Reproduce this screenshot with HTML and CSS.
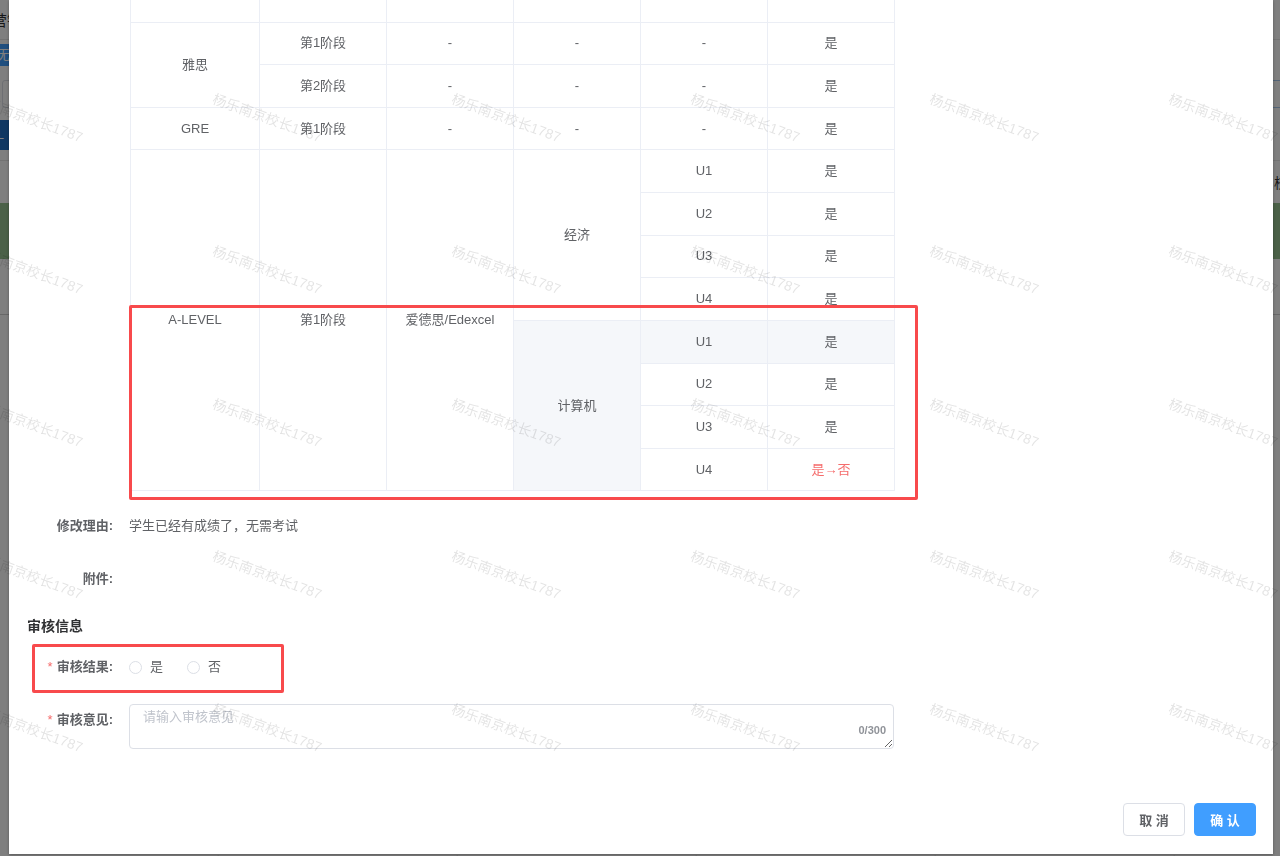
FILE: index.html
```html
<!DOCTYPE html>
<html lang="zh-CN">
<head>
<meta charset="utf-8">
<title>审核</title>
<link rel="stylesheet" href="styles.css">
</head>
<body>
<div class="page">
  <div class="pg-top"><span class="pg-title">营销管理</span></div>
  <div class="pg-tabs"><span class="pg-tab">无</span><span class="pg-tab-r"></span></div>
  <div class="pg-inputs"><span class="pg-input"></span><span class="pg-input pg-input-r"></span></div>
  <div class="pg-btns"><span class="pg-btn">L</span></div>
  <div class="pg-row"><span class="pg-right-text">校</span></div>
  <div class="pg-green"></div>
  <div class="pg-line"></div>
</div>

<div class="overlay">
  <div class="dialog">
    <div class="dialog-body">
      <table class="grid">
        <colgroup><col class="c-first"><col class="c"><col class="c"><col class="c"><col class="c"><col class="c"></colgroup>
        <tbody>
          <tr class="partial"><td></td><td></td><td></td><td></td><td></td><td></td></tr>
          <tr><td rowspan="2">雅思</td><td>第1阶段</td><td>-</td><td>-</td><td>-</td><td>是</td></tr>
          <tr><td>第2阶段</td><td>-</td><td>-</td><td>-</td><td>是</td></tr>
          <tr><td>GRE</td><td>第1阶段</td><td>-</td><td>-</td><td>-</td><td>是</td></tr>
          <tr><td rowspan="8">A-LEVEL</td><td rowspan="8">第1阶段</td><td rowspan="8">爱德思/Edexcel</td><td rowspan="4">经济</td><td>U1</td><td>是</td></tr>
          <tr><td>U2</td><td>是</td></tr>
          <tr><td>U3</td><td>是</td></tr>
          <tr><td>U4</td><td>是</td></tr>
          <tr class="hover"><td rowspan="4" class="hl">计算机</td><td>U1</td><td>是</td></tr>
          <tr><td>U2</td><td>是</td></tr>
          <tr><td>U3</td><td>是</td></tr>
          <tr><td>U4</td><td class="changed">是→否</td></tr>
        </tbody>
      </table>

      <div class="form-item first">
        <label class="form-label">修改理由:</label>
        <div class="form-content">学生已经有成绩了，无需考试</div>
      </div>
      <div class="form-item">
        <label class="form-label">附件:</label>
        <div class="form-content"></div>
      </div>

      <div class="section-title">审核信息</div>

      <div class="form-item">
        <label class="form-label"><span class="req">*</span>审核结果:</label>
        <div class="form-content radios">
          <span class="radio"><span class="radio-dot"></span><span class="radio-text">是</span></span>
          <span class="radio"><span class="radio-dot"></span><span class="radio-text">否</span></span>
        </div>
      </div>
      <div class="form-item">
        <label class="form-label"><span class="req">*</span>审核意见:</label>
        <div class="form-content">
          <div class="textarea-wrap">
            <textarea class="textarea" placeholder="请输入审核意见"></textarea>
            <span class="count">0/300</span>
          </div>
        </div>
      </div>
    </div>
    <div class="dialog-footer">
      <button class="btn">取 消</button>
      <button class="btn btn-primary">确 认</button>
    </div>

    <div class="mark mark-table"></div>
    <div class="mark mark-radio"></div>
  </div>
</div>

<div class="watermark">
  <span>杨乐南京校长1787</span><span>杨乐南京校长1787</span><span>杨乐南京校长1787</span><span>杨乐南京校长1787</span><span>杨乐南京校长1787</span><span>杨乐南京校长1787</span>
  <span>杨乐南京校长1787</span><span>杨乐南京校长1787</span><span>杨乐南京校长1787</span><span>杨乐南京校长1787</span><span>杨乐南京校长1787</span><span>杨乐南京校长1787</span>
  <span>杨乐南京校长1787</span><span>杨乐南京校长1787</span><span>杨乐南京校长1787</span><span>杨乐南京校长1787</span><span>杨乐南京校长1787</span><span>杨乐南京校长1787</span>
  <span>杨乐南京校长1787</span><span>杨乐南京校长1787</span><span>杨乐南京校长1787</span><span>杨乐南京校长1787</span><span>杨乐南京校长1787</span><span>杨乐南京校长1787</span>
  <span>杨乐南京校长1787</span><span>杨乐南京校长1787</span><span>杨乐南京校长1787</span><span>杨乐南京校长1787</span><span>杨乐南京校长1787</span><span>杨乐南京校长1787</span>
  <span>杨乐南京校长1787</span><span>杨乐南京校长1787</span><span>杨乐南京校长1787</span><span>杨乐南京校长1787</span><span>杨乐南京校长1787</span><span>杨乐南京校长1787</span>
</div>
</body>
</html>
```

FILE: styles.css
```css
* { box-sizing: border-box; }
html, body { margin: 0; padding: 0; }
body {
  width: 1280px;
  height: 856px;
  overflow: hidden;
  background: #fff;
  font-family: "Liberation Sans", "Noto Sans CJK SC", sans-serif;
  font-size: 13px;
  color: #606266;
}

/* ---------- underlying page (seen at the edges) ---------- */
.page { width: 1280px; }
.pg-top {
  height: 40px;
  border-bottom: 1px solid #e6e6e6;
  display: flex;
  align-items: center;
}
.pg-title { margin-left: -8px; font-size: 15px; color: #303133; }
.pg-tabs {
  height: 30px;
  margin-top: 4px;
  display: flex;
  justify-content: space-between;
}
.pg-tab {
  width: 30px;
  margin-left: -14px;
  background: #409eff;
  color: #fff;
  text-align: right;
  line-height: 22px;
  height: 22px;
  padding-right: 6px;
}
.pg-inputs {
  margin-top: 6px;
  height: 28px;
  display: flex;
  justify-content: space-between;
}
.pg-input { width: 30px; margin-left: 2px; border: 1px solid #dcdfe6; border-radius: 3px; }
.pg-input-r { margin-left: 0; margin-right: -20px; border-color: #a6c8ee; }
.pg-btns { margin-top: 12px; height: 30px; }
.pg-btn {
  display: block;
  width: 24px;
  height: 30px;
  margin-left: -14px;
  background: #1f6fc5;
  color: #fff;
  text-align: right;
  line-height: 30px;
  padding-right: 6px;
  font-size: 12px;
}
.pg-row {
  height: 43px;
  margin-top: 10px;
  border-top: 1px solid #e6e6e6;
  display: flex;
  justify-content: flex-end;
  align-items: center;
}
.pg-right-text { margin-right: -8px; font-size: 14px; color: #303133; }
.pg-green { height: 56px; background: #96c290; }
.pg-line { height: 56px; border-bottom: 1px solid #d0d0d0; }

/* ---------- overlay & dialog ---------- */
.overlay {
  position: fixed;
  inset: 0;
  background: rgba(0, 0, 0, 0.5);
  display: flex;
  align-items: flex-start;
}
.dialog {
  position: relative;
  margin-left: 9px;
  width: 1264px;
  height: 854px;
  background: #fff;
  box-shadow: 0 1px 3px rgba(0, 0, 0, 0.3);
  display: flex;
  flex-direction: column;
}
.dialog-body { flex: 1; }

/* ---------- table ---------- */
.grid {
  margin-left: 121px;
  width: 764px;
  table-layout: fixed;
  border-collapse: collapse;
}
.grid col.c-first { width: 129px; }
.grid col.c { width: 127px; }
.grid td {
  border: 1px solid #ebeef5;
  text-align: center;
  vertical-align: middle;
  padding: 0 10px;
  color: #606266;
  font-size: 13px;
  line-height: 20px;
}
.grid tr { height: 42.636px; }
.grid tr.partial { height: 22px; }
.grid tr.partial td { border-top: none; }
.grid tr.hover td, .grid td.hl { background: #f5f7fa; }
.grid td.changed { color: #f56c6c; }

/* ---------- form ---------- */
.form-item {
  display: flex;
  align-items: flex-start;
  margin-top: 21px;
}
.form-item.first { margin-top: 19px; }
.form-label {
  width: 120px;
  padding-right: 16px;
  text-align: right;
  line-height: 32px;
  font-weight: 700;
  color: #606266;
  flex: none;
}
.req { color: #f56c6c; margin-right: 4px; font-weight: 400; }
.form-content {
  line-height: 32px;
  min-height: 32px;
  color: #606266;
}
.section-title {
  margin: 21px 0 0 18px;
  font-size: 14px;
  font-weight: 700;
  line-height: 20px;
  color: #303133;
}
.section-title + .form-item { margin-top: 15px; }

.radios { display: flex; align-items: center; height: 32px; }
.radio { display: flex; align-items: center; margin-right: 24px; }
.radio-dot {
  width: 13px;
  height: 13px;
  border: 1px solid #dcdfe6;
  border-radius: 50%;
  background: #fff;
  margin-right: 8px;
}
.radio-text { color: #606266; }

.textarea-wrap { position: relative; width: 765px; }
.textarea {
  display: block;
  width: 765px;
  height: 45px;
  border: 1px solid #dcdfe6;
  border-radius: 4px;
  padding: 2px 13px;
  font-family: inherit;
  font-size: 13px;
  line-height: 20px;
  color: #606266;
  resize: vertical;
  outline: none;
  background: transparent;
}
.textarea::placeholder { color: #c0c4cc; }
.count {
  position: absolute;
  right: 8px;
  bottom: 13px;
  font-size: 11px;
  line-height: 12px;
  color: #909399;
  font-weight: 700;
}

/* ---------- footer ---------- */
.dialog-footer {
  display: flex;
  justify-content: flex-end;
  gap: 9px;
  padding: 0 17px 18px 0;
}
.btn {
  width: 62px;
  height: 33px;
  border: 1px solid #dcdfe6;
  border-radius: 4px;
  background: #fff;
  color: #606266;
  font-family: inherit;
  font-size: 13px;
  font-weight: 700;
  padding: 0;
}
.btn-primary {
  background: #409eff;
  border-color: #409eff;
  color: #fff;
}

/* ---------- annotation boxes ---------- */
.mark {
  position: absolute;
  border: 3.5px solid #f84a4c;
  border-radius: 2px;
  pointer-events: none;
}
.mark-table { left: 120px; top: 305px; width: 789px; height: 195px; }
.mark-radio { left: 23px; top: 644px; width: 252px; height: 49px; border-width: 3px; }

/* ---------- watermark ---------- */
.watermark {
  position: fixed;
  left: -91.5px;
  top: 40.75px;
  display: grid;
  grid-template-columns: repeat(6, 239px);
  grid-auto-rows: 152.5px;
  pointer-events: none;
}
.watermark span {
  display: flex;
  align-items: center;
  justify-content: center;
  transform: rotate(20deg);
  font-size: 14px;
  color: rgba(0, 0, 0, 0.11);
  white-space: nowrap;
}
```
